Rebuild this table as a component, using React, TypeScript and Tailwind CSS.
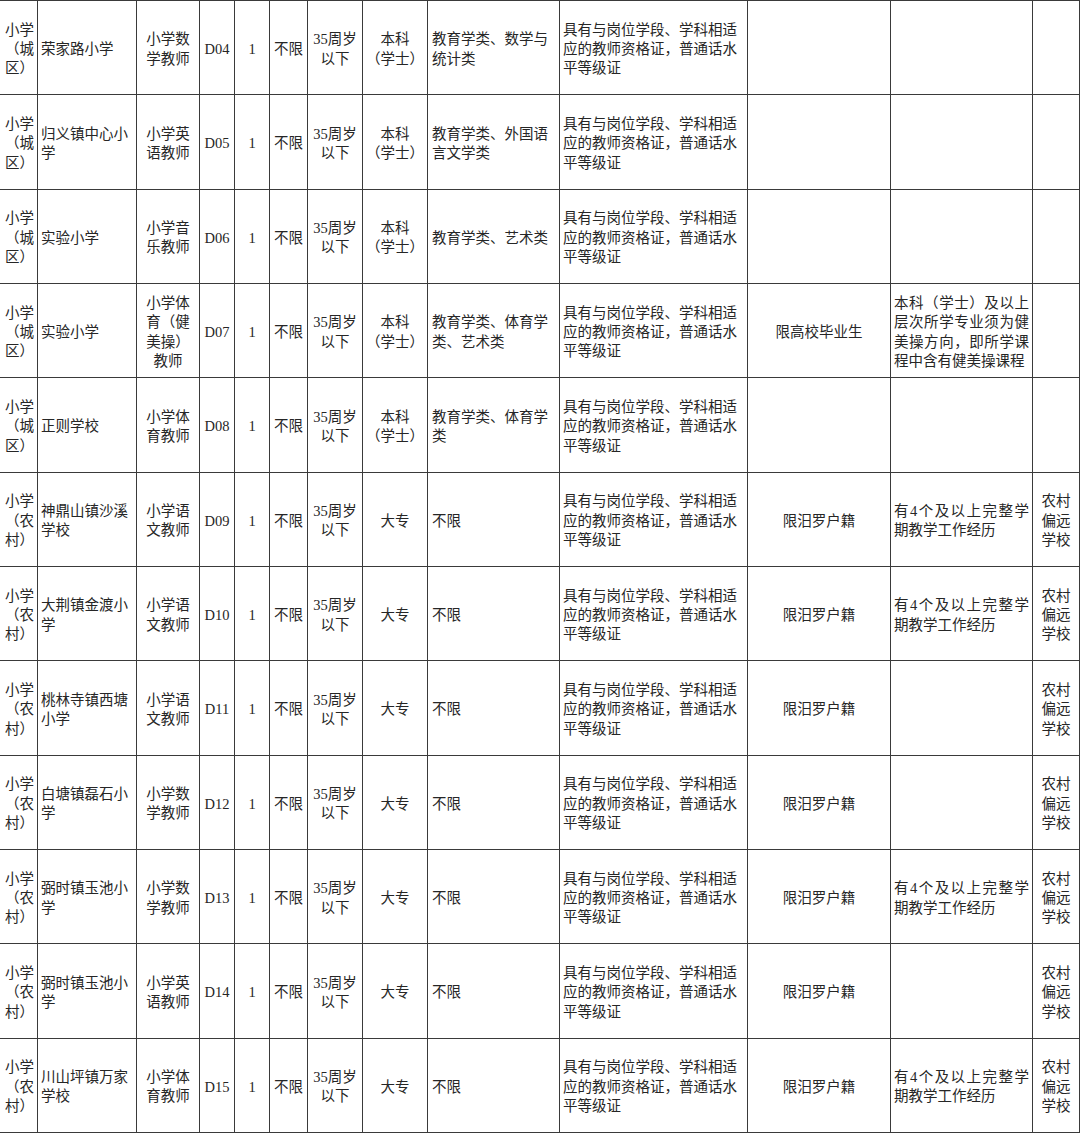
import React from "react";

type Row = {
  type: string;
  school: string;
  post: string;
  code: string;
  edu: string[];
  major: string;
  limit: string;
  note: string;
  remote: string;
};

const CERT = "具有与岗位学段、学科相适应的教师资格证，普通话水平等级证";
const EXP = "有4个及以上完整学期教学工作经历";
const BK = ["本科", "（学士）"];
const DZ = ["大专"];

const rows: Row[] = [
  { type: "小学（城区）", school: "荣家路小学", post: "小学数学教师", code: "D04", edu: BK, major: "教育学类、数学与统计类", limit: "", note: "", remote: "" },
  { type: "小学（城区）", school: "归义镇中心小学", post: "小学英语教师", code: "D05", edu: BK, major: "教育学类、外国语言文学类", limit: "", note: "", remote: "" },
  { type: "小学（城区）", school: "实验小学", post: "小学音乐教师", code: "D06", edu: BK, major: "教育学类、艺术类", limit: "", note: "", remote: "" },
  { type: "小学（城区）", school: "实验小学", post: "小学体育（健美操）教师", code: "D07", edu: BK, major: "教育学类、体育学类、艺术类", limit: "限高校毕业生", note: "本科（学士）及以上层次所学专业须为健美操方向，即所学课程中含有健美操课程", remote: "" },
  { type: "小学（城区）", school: "正则学校", post: "小学体育教师", code: "D08", edu: BK, major: "教育学类、体育学类", limit: "", note: "", remote: "" },
  { type: "小学（农村）", school: "神鼎山镇沙溪学校", post: "小学语文教师", code: "D09", edu: DZ, major: "不限", limit: "限汨罗户籍", note: EXP, remote: "农村偏远学校" },
  { type: "小学（农村）", school: "大荆镇金渡小学", post: "小学语文教师", code: "D10", edu: DZ, major: "不限", limit: "限汨罗户籍", note: EXP, remote: "农村偏远学校" },
  { type: "小学（农村）", school: "桃林寺镇西塘小学", post: "小学语文教师", code: "D11", edu: DZ, major: "不限", limit: "限汨罗户籍", note: "", remote: "农村偏远学校" },
  { type: "小学（农村）", school: "白塘镇磊石小学", post: "小学数学教师", code: "D12", edu: DZ, major: "不限", limit: "限汨罗户籍", note: "", remote: "农村偏远学校" },
  { type: "小学（农村）", school: "弼时镇玉池小学", post: "小学数学教师", code: "D13", edu: DZ, major: "不限", limit: "限汨罗户籍", note: EXP, remote: "农村偏远学校" },
  { type: "小学（农村）", school: "弼时镇玉池小学", post: "小学英语教师", code: "D14", edu: DZ, major: "不限", limit: "限汨罗户籍", note: "", remote: "农村偏远学校" },
  { type: "小学（农村）", school: "川山坪镇万家学校", post: "小学体育教师", code: "D15", edu: DZ, major: "不限", limit: "限汨罗户籍", note: EXP, remote: "农村偏远学校" },
];

function Cell({
  children,
  align = "center",
  px = "px-[3px]",
}: {
  children?: React.ReactNode;
  align?: "center" | "left" | "justify";
  px?: string;
}) {
  const a =
    align === "center"
      ? " justify-center text-center"
      : align === "justify"
      ? " justify-start text-justify"
      : " justify-start text-left";
  return (
    <div
      className={
        "flex items-center pt-[4px] border-r border-b border-[#3a3a3a] min-w-0 overflow-hidden " +
        px +
        a
      }
    >
      <div className="w-full">{children}</div>
    </div>
  );
}

export default function App() {
  return (
    <div
      className="w-[1080px] bg-white text-[#262626] text-[14.5px] leading-[19.3px]"
      style={{ fontFamily: '"Liberation Serif", "Noto Sans CJK SC", serif' }}
    >
      <div className="grid grid-cols-[38px_99px_63px_35px_35px_38px_55px_65px_132px_188px_143px_142px_47px] auto-rows-[94.33px] border-t border-[#3a3a3a]">
        {rows.map((r) => (
          <React.Fragment key={r.code}>
            <Cell align="left" px="pl-[5px] pr-[1px]">{r.type}</Cell>
            <Cell align="left" px="pl-[3px] pr-[4px]">{r.school}</Cell>
            <Cell px="px-[4px]">{r.post}</Cell>
            <Cell px="px-[2px]">{r.code}</Cell>
            <Cell>1</Cell>
            <Cell px="px-[2px]">不限</Cell>
            <Cell px="px-[3px]">
              35周岁
              <br />
              以下
            </Cell>
            <Cell px="px-[2px]">
              {r.edu.map((l, i) => (
                <div key={i}>{l}</div>
              ))}
            </Cell>
            <Cell align="left" px="pl-[4px] pr-[4px]">{r.major}</Cell>
            <Cell align="left" px="pl-[3px] pr-[3px]">{CERT}</Cell>
            <Cell>{r.limit}</Cell>
            <Cell align="justify" px="pl-[3px] pr-[3px]">{r.note}</Cell>
            <Cell px="px-[4px]">{r.remote}</Cell>
          </React.Fragment>
        ))}
      </div>
    </div>
  );
}
